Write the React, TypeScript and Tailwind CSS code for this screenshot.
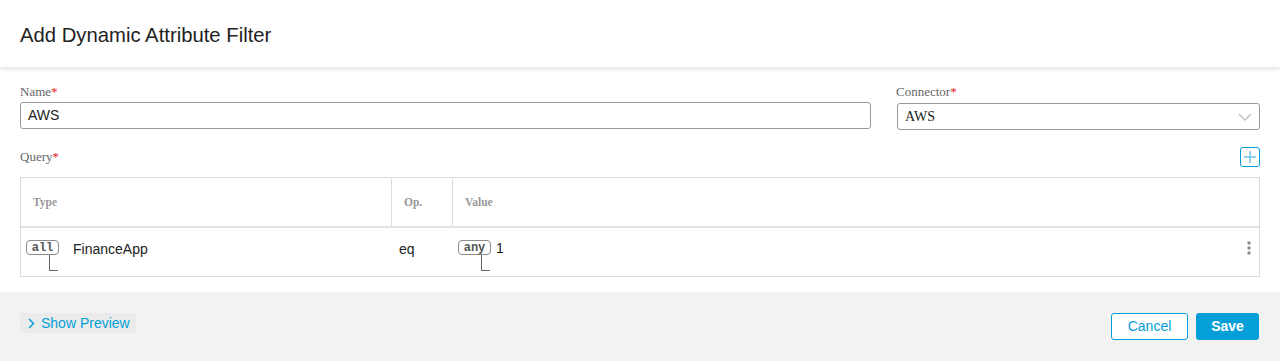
const sans = { fontFamily: '"Liberation Sans", Arial, sans-serif' };
const serif = { fontFamily: '"Liberation Serif", "Times New Roman", serif' };
const mono = { fontFamily: '"Liberation Mono", "DejaVu Sans Mono", monospace' };

function Label({ text }: { text: string }) {
  return (
    <div className="h-4 text-[13px] leading-4 text-[#666]" style={serif}>
      {text}
      <span className="text-[#e2231a]">*</span>
    </div>
  );
}

/** Pastilha "all" / "any" com o traço de árvore logo abaixo */
function Chip({ text }: { text: string }) {
  return (
    <div className="flex flex-col">
      <span
        className="flex h-[15px] w-[33px] items-center justify-center rounded-[4px] border border-[#8a8a8a] text-[12px] font-bold leading-none text-[#555]"
        style={mono}
      >
        {text}
      </span>
      <div className="ml-[23px] h-[16px] w-[9px] border-b border-l border-[#666]" />
    </div>
  );
}

function Kebab() {
  return (
    <svg width="4" height="14" viewBox="0 0 4 14" className="mr-[8px] mt-[1px]">
      <rect x="0.5" y="0.5" width="3" height="3" rx="0.8" fill="#888" />
      <rect x="0.5" y="5.5" width="3" height="3" rx="0.8" fill="#888" />
      <rect x="0.5" y="10.5" width="3" height="3" rx="0.8" fill="#888" />
    </svg>
  );
}

export default function App() {
  return (
    <div className="flex h-[361px] w-[1280px] flex-col bg-white" style={sans}>
      {/* Cabeçalho */}
      <div className="relative z-10 flex h-[67px] shrink-0 items-center px-5 pt-[4px] shadow-[0_2px_4px_rgba(0,0,0,0.12)]">
        <h1 className="text-[20.3px] text-[#222]">Add Dynamic Attribute Filter</h1>
      </div>

      {/* Formulário */}
      <div className="flex-1 px-5 pt-[17px]">
        <div className="flex gap-[25px]">
          <div className="flex w-[851px] flex-col gap-[2px]">
            <Label text="Name" />
            <div className="flex h-[27px] items-center rounded-[3px] border border-[#999] px-[7px] text-[14px] text-[#222]">
              AWS
            </div>
          </div>
          <div className="flex flex-1 flex-col gap-[3px]">
            <Label text="Connector" />
            <div
              className="ml-px flex h-[27px] items-center justify-between rounded-[3px] border border-[#999] pl-[7px] pr-[7px] text-[14px] text-[#222]"
              style={serif}
            >
              <span>AWS</span>
              <svg width="14" height="8" viewBox="0 0 14 8" fill="none">
                <polyline points="1,1 7,7 13,1" stroke="#c4c4c4" strokeWidth="1.5" />
              </svg>
            </div>
          </div>
        </div>

        <div className="mt-[17px] flex h-5 items-center justify-between">
          <Label text="Query" />
          <button
            type="button"
            className="flex h-5 w-5 items-center justify-center rounded-[3px] border-[1.5px] border-[#049fd9]"
          >
            <svg width="14" height="14" viewBox="0 0 14 14">
              <line x1="7" y1="1" x2="7" y2="13" stroke="#79c8ec" strokeWidth="1.6" />
              <line x1="1" y1="7" x2="13" y2="7" stroke="#79c8ec" strokeWidth="1.6" />
            </svg>
          </button>
        </div>

        {/* Tabela de query */}
        <div className="mt-[10px] border border-[#dcdcdc]">
          <div
            className="flex h-[50px] border-b-2 border-[#e3e3e3] pt-px text-[11.5px] font-bold text-[#999]"
            style={serif}
          >
            <div className="flex w-[371px] items-center border-r border-[#dcdcdc] px-3">Type</div>
            <div className="flex w-[61px] items-center border-r border-[#dcdcdc] px-3">Op.</div>
            <div className="flex flex-1 items-center px-3">Value</div>
          </div>
          <div className="flex h-[48px] text-[14px] text-[#222]">
            <div className="flex w-[371px] items-start gap-[14px] pl-[5px] pt-[12px]">
              <Chip text="all" />
              <span className="mt-[0px] leading-[18px]">FinanceApp</span>
            </div>
            <div className="w-[61px] pl-[7px] pt-[12px] leading-[18px]">eq</div>
            <div className="flex flex-1 items-start gap-[5px] pl-[5px] pt-[12px]">
              <Chip text="any" />
              <span className="mt-[-1px] flex-1 leading-[18px]">1</span>
              <Kebab />
            </div>
          </div>
        </div>
      </div>

      {/* Rodapé */}
      <div className="flex h-[69px] shrink-0 items-start justify-between bg-[#f2f2f2] pl-5 pr-[21px] pt-[21px]">
        <button
          type="button"
          className="flex h-5 items-center gap-[6px] bg-[#ebebeb] pl-[8px] pr-[6px] text-[14px] text-[#049fd9]"
        >
          <svg width="7" height="11" viewBox="0 0 7 11" fill="none">
            <polyline points="1,1 5.5,5.5 1,10" stroke="#049fd9" strokeWidth="1.5" />
          </svg>
          Show Preview
        </button>
        <div className="flex gap-2">
          <button
            type="button"
            className="h-[27px] w-[77px] rounded-[3px] border border-[#049fd9] bg-white text-[14px] text-[#049fd9]"
          >
            Cancel
          </button>
          <button
            type="button"
            className="h-[27px] w-[63px] rounded-[3px] bg-[#049fd9] text-[14px] font-bold text-white"
          >
            Save
          </button>
        </div>
      </div>
    </div>
  );
}
